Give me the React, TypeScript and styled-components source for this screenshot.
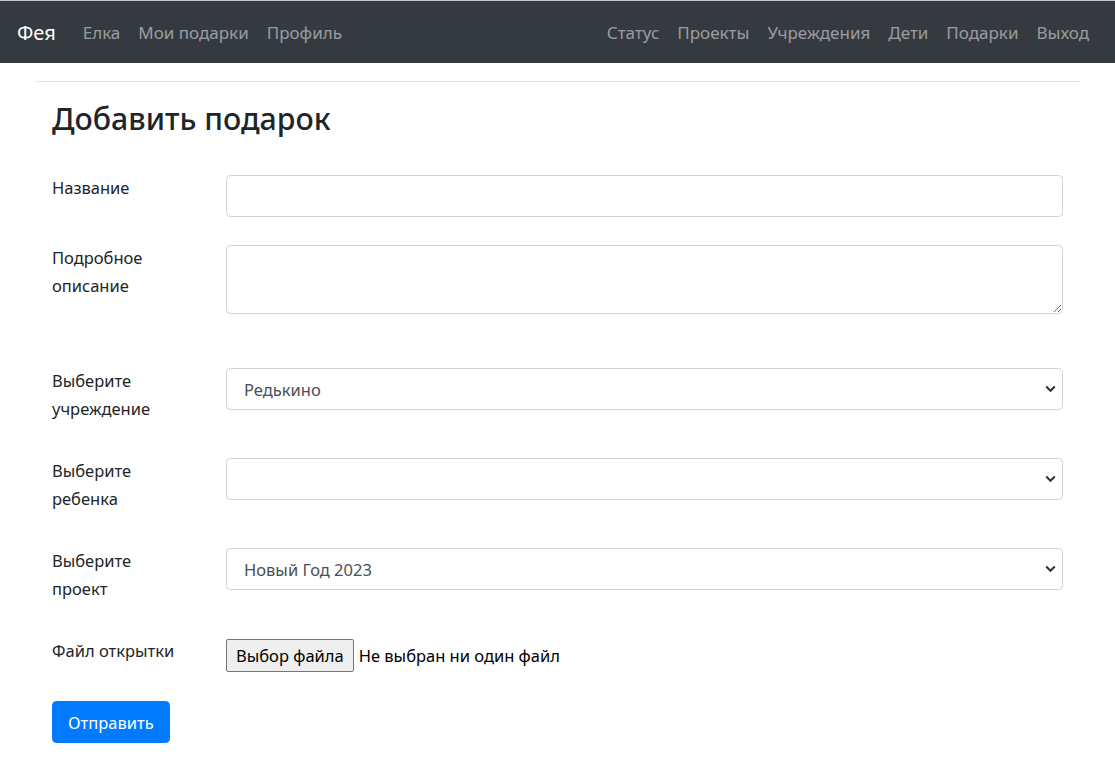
import React from "react";
import styled, { createGlobalStyle } from "styled-components";

const FONT = `"Noto Sans", "Open Sans", "Liberation Sans", sans-serif`;

const Global = createGlobalStyle`
  html, body { margin: 0; padding: 0; background: #fff; }
  body { font-family: ${FONT}; color: #212529; }
  * { box-sizing: border-box; }
`;

const Page = styled.div`
  border-top: 1px solid #c6c6c6;
  min-height: 769px;
`;

const Navbar = styled.nav`
  height: 62px;
  background: #343a40;
  display: flex;
  align-items: center;
  padding: 0 17px 0 17px;
`;

const Brand = styled.a`
  color: #fff;
  font-size: 20px;
  line-height: 30px;
  margin-right: 18px;
  padding-top: 1px;
  text-decoration: none;
`;

const NavGroup = styled.div<{ $right?: boolean }>`
  display: flex;
  align-items: center;
  margin-left: ${(p) => (p.$right ? "auto" : "0")};
`;

const NavLink = styled.a`
  color: rgba(255, 255, 255, 0.5);
  font-size: 17px;
  line-height: 26px;
  padding: 10px 9px 8px;
  text-decoration: none;
`;

const Rule = styled.hr`
  border: 0;
  border-top: 1px solid rgba(0, 0, 0, 0.1);
  margin: 18px 34px 0 35px;
`;

const Content = styled.main`
  padding: 0 52px;
`;

const Title = styled.h2`
  font-size: 30.3px;
  font-weight: 500;
  line-height: 42px;
  margin: 16px 0 34px;
  color: #212529;
`;

const Form = styled.form`
  display: flex;
  flex-direction: column;
`;

const Row = styled.div<{ $gap?: number }>`
  display: grid;
  grid-template-columns: 174px 1fr;
  align-items: start;
  margin-bottom: ${(p) => p.$gap ?? 27}px;
`;

const Label = styled.label`
  font-size: 16.5px;
  line-height: 28px;
  margin-bottom: 7px;
  color: #212529;
`;

const Input = styled.input`
  height: 42px;
  width: 100%;
  border: 1px solid #ced4da;
  border-radius: 4.4px;
  padding: 0 13px;
  font: inherit;
  font-size: 16.5px;
  color: #495057;
  margin-top: 1px;
`;

const TextArea = styled.textarea`
  height: 69px;
  width: 100%;
  border: 1px solid #ced4da;
  border-radius: 4.4px;
  padding: 7px 13px;
  font: inherit;
  font-size: 16.5px;
  color: #495057;
  resize: vertical;
  display: block;
  margin-top: 1px;
`;

const SelectWrap = styled.div`
  position: relative;
  margin-top: 1px;
`;

const Select = styled.select`
  appearance: none;
  -webkit-appearance: none;
  height: 42px;
  width: 100%;
  border: 1px solid #ced4da;
  border-radius: 4.4px;
  padding: 0 30px 0 17px;
  font: inherit;
  font-size: 16.5px;
  color: #495057;
  background: #fff;
  display: block;
`;

const Chevron = styled.svg`
  position: absolute;
  right: 7px;
  top: 50%;
  margin-top: -4px;
  width: 11px;
  height: 8px;
  pointer-events: none;
`;

const FileRow = styled.div`
  display: flex;
  align-items: center;
  gap: 5px;
  margin-top: 2px;
`;

const FileButton = styled.button`
  height: 33px;
  padding: 0 9px;
  background: #efefef;
  border: 1px solid #767676;
  border-radius: 2px;
  font-family: ${FONT};
  font-size: 16.5px;
  color: #000;
`;

const FileText = styled.span`
  font-size: 16.5px;
  color: #000;
`;

const Submit = styled.button`
  align-self: flex-start;
  height: 42px;
  margin-top: 2px;
  padding: 0 15px;
  background: #007bff;
  color: #fff;
  border: 1px solid #007bff;
  border-radius: 4.4px;
  font-family: ${FONT};
  font-size: 16.5px;
`;

function SelectBox({ value }: { value: string }) {
  return (
    <SelectWrap>
      <Select defaultValue={value}>
        <option value={value}>{value}</option>
      </Select>
      <Chevron viewBox="0 0 11 8">
        <path d="M1.2 1.5 L5.5 5.8 L9.8 1.5" fill="none" stroke="#333" strokeWidth="2" />
      </Chevron>
    </SelectWrap>
  );
}

export default function App() {
  return (
    <Page>
      <Global />
      <Navbar>
        <Brand href="#">Фея</Brand>
        <NavGroup>
          <NavLink href="#">Елка</NavLink>
          <NavLink href="#">Мои подарки</NavLink>
          <NavLink href="#">Профиль</NavLink>
        </NavGroup>
        <NavGroup $right>
          <NavLink href="#">Статус</NavLink>
          <NavLink href="#">Проекты</NavLink>
          <NavLink href="#">Учреждения</NavLink>
          <NavLink href="#">Дети</NavLink>
          <NavLink href="#">Подарки</NavLink>
          <NavLink href="#">Выход</NavLink>
        </NavGroup>
      </Navbar>
      <Rule />
      <Content>
        <Title>Добавить подарок</Title>
        <Form onSubmit={(e) => e.preventDefault()}>
          <Row>
            <Label>Название</Label>
            <Input type="text" />
          </Row>
          <Row $gap={53}>
            <Label>
              Подробное
              <br />
              описание
            </Label>
            <TextArea />
          </Row>
          <Row>
            <Label>
              Выберите
              <br />
              учреждение
            </Label>
            <SelectBox value="Редькино" />
          </Row>
          <Row>
            <Label>
              Выберите
              <br />
              ребенка
            </Label>
            <SelectBox value="" />
          </Row>
          <Row>
            <Label>
              Выберите
              <br />
              проект
            </Label>
            <SelectBox value="Новый Год 2023" />
          </Row>
          <Row>
            <Label>Файл открытки</Label>
            <FileRow>
              <FileButton type="button">Выбор файла</FileButton>
              <FileText>Не выбран ни один файл</FileText>
            </FileRow>
          </Row>
          <Submit type="submit">Отправить</Submit>
        </Form>
      </Content>
    </Page>
  );
}
